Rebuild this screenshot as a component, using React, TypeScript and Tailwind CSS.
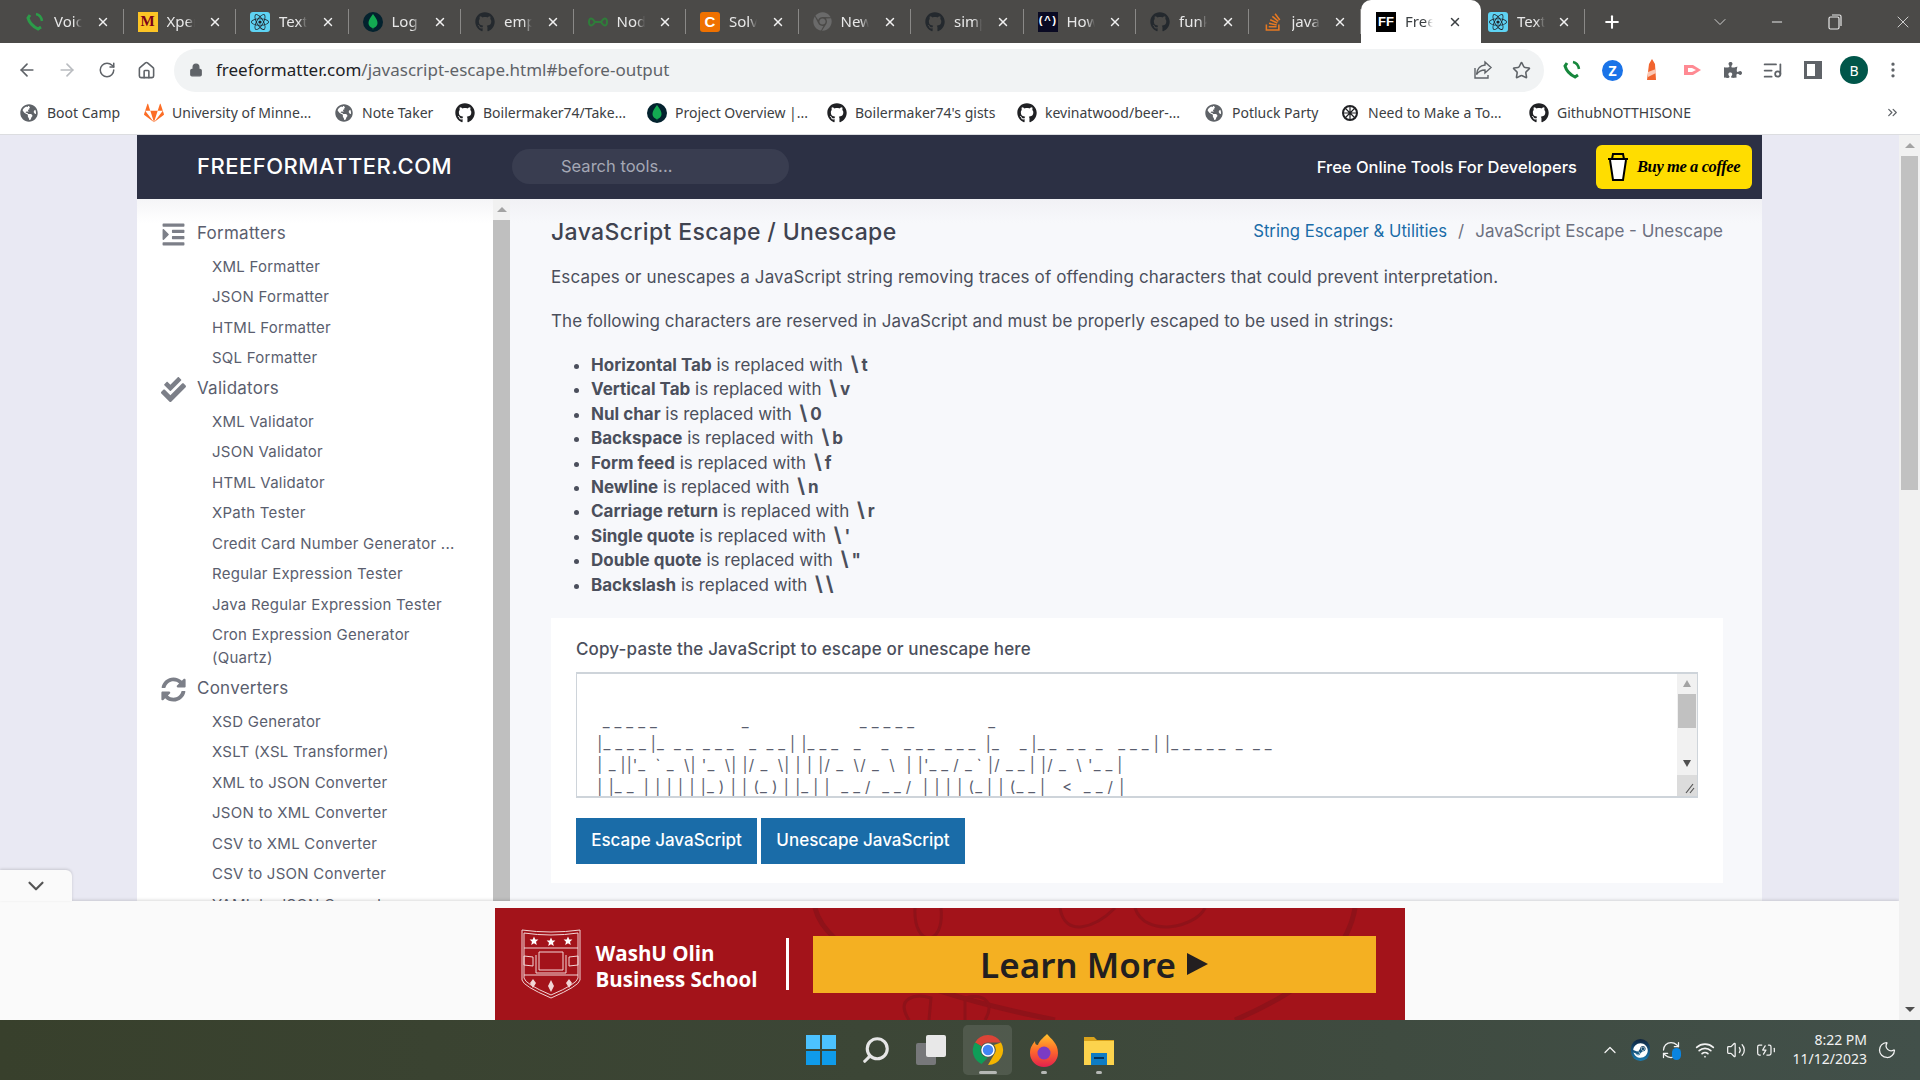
import React from 'react';
import {
  FaGithub,
  FaReact,
  FaStackOverflow,
  FaChrome,
  FaGitlab,
  FaGlobeAmericas,
  FaIndent,
  FaCheckDouble,
  FaSyncAlt,
  FaPuzzlePiece,
  FaSteam,
} from 'react-icons/fa';
import {
  ArrowLeft,
  ArrowRight,
  RotateCw,
  Home,
  Lock,
  Star,
  MoreVertical,
  ChevronDown,
  ChevronUp,
  Minus,
  X,
  Plus,
  Search,
  ListMusic,
  Wifi,
  Volume2,
  Moon,
  RefreshCw,
  BatteryCharging,
  ChevronsRight,
} from 'lucide-react';

const MongoIcon = ({ size = 20 }: { size?: number }) => (
  <span className="flex items-center justify-center rounded-full bg-[#03222e] shrink-0" style={{ width: size, height: size }}>
    <svg width={size * 0.5} height={size * 0.8} viewBox="0 0 10 16">
      <path d="M5 0 C8 4 9.5 6 9.5 9 C9.5 12 7 13.5 5.4 14 L5 16 L4.6 14 C3 13.5 0.5 12 0.5 9 C0.5 6 2 4 5 0" fill="#13aa52" />
    </svg>
  </span>
);

const ReactTile = () => (
  <span className="flex h-5 w-5 items-center justify-center rounded-[3px] bg-[#5ed3f3] text-[#20232a] shrink-0">
    <FaReact size={18} />
  </span>
);

const tabs = [
  { title: 'Voic', icon: <svg width="20" height="20" viewBox="0 0 20 20" fill="none" stroke="#2c9c49" strokeWidth="3"><path d="M5 3 L3 6 Q5 13 13 17 L16 15" /><path d="M11 2 Q16 3 17 9" strokeWidth="2.5" /></svg> },
  { title: 'Xper', icon: <span className="flex h-5 w-5 items-center justify-center bg-[#fcc425] text-[15px] font-black leading-none text-[#7a0019] font-['Liberation_Serif',serif] shrink-0">M</span> },
  { title: 'Text', icon: <ReactTile /> },
  { title: 'Log', icon: <MongoIcon /> },
  { title: 'emp', icon: <FaGithub size={20} className="text-[#24292e] shrink-0" /> },
  { title: 'Nod', icon: <svg width="20" height="20" viewBox="0 0 20 20" fill="none" stroke="#2f7d3a" strokeWidth="2"><path d="M7 10 C3 4 1 7 1 10 C1 13 3 16 7 10 L13 10 C17 4 19 7 19 10 C19 13 17 16 13 10" /></svg> },
  { title: 'Solv', icon: <span className="flex h-5 w-5 items-center justify-center rounded-[3px] bg-[#ef7100] text-[15px] font-bold leading-none text-white font-['Liberation_Sans',sans-serif] shrink-0">C</span> },
  { title: 'New', icon: <FaChrome size={19} className="text-[#6a6a6a] shrink-0" /> },
  { title: 'simp', icon: <FaGithub size={20} className="text-[#24292e] shrink-0" /> },
  { title: 'How', icon: <span className="flex h-5 w-5 items-center justify-center bg-[#0a0a23] text-[11px] font-bold leading-none text-white font-['Liberation_Mono',monospace] shrink-0">(^)</span> },
  { title: 'funk', icon: <FaGithub size={20} className="text-[#24292e] shrink-0" /> },
  { title: 'java', icon: <FaStackOverflow size={20} className="text-[#e87922] shrink-0" /> },
];

const bookmarks = [
  { label: 'Boot Camp', icon: <FaGlobeAmericas size={18} className="text-[#5f6368]" />, w: 125 },
  { label: 'University of Minne...', icon: <FaGitlab size={20} className="text-[#fc6d26]" />, w: 190 },
  { label: 'Note Taker', icon: <FaGlobeAmericas size={18} className="text-[#5f6368]" />, w: 121 },
  { label: 'Boilermaker74/Take...', icon: <FaGithub size={20} className="text-[#202124]" />, w: 192 },
  { label: 'Project Overview |...', icon: <MongoIcon />, w: 180 },
  { label: "Boilermaker74's gists", icon: <FaGithub size={20} className="text-[#202124]" />, w: 190 },
  { label: 'kevinatwood/beer-...', icon: <FaGithub size={20} className="text-[#202124]" />, w: 187 },
  { label: 'Potluck Party', icon: <FaGlobeAmericas size={18} className="text-[#5f6368]" />, w: 136 },
  { label: 'Need to Make a To...', icon: <svg width="18" height="18" viewBox="0 0 18 18" fill="none" stroke="#202124" strokeWidth="2"><circle cx="9" cy="9" r="7" /><path d="M2 9 H16 M9 2 V16 M4 4 L14 14 M14 4 L4 14" strokeWidth="1.2" /></svg>, w: 189 },
  { label: 'GithubNOTTHISONE', icon: <FaGithub size={20} className="text-[#202124]" />, w: 180 },
];

const navSections = [
  {
    title: 'Formatters',
    icon: <FaIndent size={25} />,
    items: ['XML Formatter', 'JSON Formatter', 'HTML Formatter', 'SQL Formatter'],
  },
  {
    title: 'Validators',
    icon: <FaCheckDouble size={25} />,
    items: [
      'XML Validator',
      'JSON Validator',
      'HTML Validator',
      'XPath Tester',
      'Credit Card Number Generator ...',
      'Regular Expression Tester',
      'Java Regular Expression Tester',
      'Cron Expression Generator (Quartz)',
    ],
  },
  {
    title: 'Converters',
    icon: <FaSyncAlt size={25} />,
    items: [
      'XSD Generator',
      'XSLT (XSL Transformer)',
      'XML to JSON Converter',
      'JSON to XML Converter',
      'CSV to XML Converter',
      'CSV to JSON Converter',
      'YAML to JSON Converter',
    ],
  },
];

const escapes = [
  ['Horizontal Tab', 't'],
  ['Vertical Tab', 'v'],
  ['Nul char', '0'],
  ['Backspace', 'b'],
  ['Form feed', 'f'],
  ['Newline', 'n'],
  ['Carriage return', 'r'],
  ['Single quote', "'"],
  ['Double quote', '"'],
  ['Backslash', '\\'],
];

const asciiArt = [
  '  _____               _                    _____             _',
  ' |____|_ __ ___  _ __| |___  _   _  ___ ___ |_   _|__ __ _  ___| |_____ _ __',
  ' | _||\'_ ` _ \\| \'_ \\| |/ _ \\| | | |/ _ \\/ _ \\  | |\'__/ _` |/ __| |/ _ \\ \'__|',
  ' | |__ | | | | | |_) | | (_) | |_| |  __/  __/  | | | | (_| | (__|   <  __/ |',
];

const Tab = ({ title, icon, active }: { title: string; icon: React.ReactNode; active?: boolean }) => (
  <div className={`flex h-[43px] shrink-0 items-center ${active ? 'w-[120px] rounded-t-[10px] bg-white pl-[15px] pr-[19px]' : 'w-[112.5px]'}`}>
    {!active && <span className="w-[14px] shrink-0" />}
    {icon}
    <span className={`ml-[9px] w-[28px] overflow-hidden whitespace-nowrap text-[15px] [mask-image:linear-gradient(90deg,#000_70%,transparent)] ${active ? 'text-[#3c4043]' : 'text-[#e8e8e8]'}`}>{title}</span>
    <X size={14} strokeWidth={2.5} className={`ml-auto shrink-0 ${active ? 'text-[#3c4043]' : 'text-[#f0f0f0]'}`} />
    {!active && <span className="ml-[13px] h-[25px] w-px shrink-0 bg-[#8a8987]" />}
  </div>
);

const TabBar = () => (
  <div className="flex h-[43px] shrink-0 items-center bg-[#4b4a48] pl-[11px]">
    {tabs.map((t, i) => (
      <Tab key={i} title={t.title} icon={t.icon} />
    ))}
    <Tab
      active
      title="Free"
      icon={<span className="flex h-5 w-5 shrink-0 items-center justify-center bg-black text-[13px] font-bold leading-none text-white font-['Liberation_Sans',sans-serif]">FF</span>}
    />
    <div className="flex h-[43px] w-[104px] shrink-0 items-center pl-[7px]">
      <ReactTile />
      <span className="ml-[9px] w-[28px] overflow-hidden whitespace-nowrap text-[15px] text-[#e8e8e8] [mask-image:linear-gradient(90deg,#000_70%,transparent)]">Text</span>
      <X size={14} strokeWidth={2.5} className="ml-auto shrink-0 text-[#f0f0f0]" />
      <span className="ml-[13px] h-[25px] w-px shrink-0 bg-[#8a8987]" />
    </div>
    <Plus size={20} strokeWidth={2.5} className="ml-[17px] text-white" />
    <ChevronDown size={20} strokeWidth={1} className="ml-[88px] text-[#e8e8e8]" />
    <Minus size={16} strokeWidth={1.5} className="ml-[39px] text-[#e8e8e8]" />
    <svg width="14" height="16" viewBox="0 0 14 16" fill="none" stroke="#e8e8e8" strokeWidth="1.2" className="ml-[43px]">
      <rect x="1" y="3" width="10" height="12" rx="1.5" />
      <path d="M4 1 H11.5 Q13 1 13 2.5 V12" />
    </svg>
    <X size={20} strokeWidth={1} className="ml-[51px] text-[#e8e8e8]" />
  </div>
);

const Toolbar = () => (
  <div className="flex h-[54px] shrink-0 items-center bg-white">
    <ArrowLeft size={20} className="ml-[17px] text-[#5f6368]" />
    <ArrowRight size={20} className="ml-[20px] text-[#b9bcc0]" />
    <RotateCw size={18} className="ml-[21px] text-[#5f6368]" />
    <Home size={19} className="ml-[21px] text-[#5f6368]" />
    <div className="ml-[18px] flex h-[43px] w-[1370px] items-center rounded-full bg-[#f1f3f4] pl-[15px]">
      <Lock size={14} fill="#5f6368" className="text-[#5f6368]" />
      <span className="ml-[13px] text-[17px] text-[#5f6368]">
        <span className="text-[#202124]">freeformatter.com</span>/javascript-escape.html#before-output
      </span>
      <svg width="20" height="20" viewBox="0 0 20 20" fill="none" stroke="#5f6368" strokeWidth="1.4" className="ml-auto mr-[-2px]">
        <path d="M12 2 L18 7.5 L12 13 V10 C8 10 5.5 11.5 3.5 14.5 C4 9.5 7 5.5 12 5 Z" />
        <path d="M2 8 V18 H15 V15" />
      </svg>
      <Star size={19} className="ml-[21px] mr-[13px] text-[#5f6368]" />
    </div>
    <svg width="20" height="20" viewBox="0 0 20 20" fill="none" stroke="#16873c" strokeWidth="3" className="ml-[18px]">
      <path d="M5 3 L3 6 Q5 13 13 17 L16 15" />
      <path d="M11 2 Q16 3 17 9" strokeWidth="2.5" />
    </svg>
    <span className="ml-[20px] flex h-[21px] w-[21px] items-center justify-center rounded-full bg-[#1a73e8] text-[14px] font-bold text-white">Z</span>
    <svg width="18" height="24" viewBox="0 0 18 24" className="ml-[20px]">
      <path d="M9 1 L12 6 L13 22 H4 L6 6 Z" fill="#f1642e" />
      <path d="M5 14 L13 11 V15 L5 19 Z" fill="#fbc8b4" />
    </svg>
    <svg width="22" height="20" viewBox="0 0 22 20" className="ml-[21px]">
      <path d="M2 5 H11 L19 10 L11 15 H2 Z" fill="#ff8a93" />
      <path d="M6 8 H10 L14 10 L10 12 H6 Z" fill="#fff" />
    </svg>
    <FaPuzzlePiece size={18} className="ml-[20px] text-[#5f6368]" />
    <ListMusic size={21} className="ml-[20px] text-[#5f6368]" />
    <svg width="18" height="18" viewBox="0 0 18 18" className="ml-[21px]">
      <path d="M0 0 H18 V18 H0 Z M3 3 V15 H11 V3 Z" fill="#5f6368" fillRule="evenodd" />
    </svg>
    <span className="ml-[18px] flex h-[28px] w-[28px] items-center justify-center rounded-full bg-[#00564a] text-[14px] text-white">B</span>
    <MoreVertical size={20} className="ml-[15px] text-[#5f6368]" />
  </div>
);

const BookmarksBar = () => (
  <div className="flex h-[38px] shrink-0 items-center border-b border-[#dcdde0] bg-white pb-[6px] pl-[19px]">
    {bookmarks.map((b) => (
      <div key={b.label} className="flex shrink-0 items-center" style={{ width: b.w }}>
        <span className="flex w-[20px] shrink-0 justify-center">{b.icon}</span>
        <span className="ml-[8px] whitespace-nowrap text-[14px] text-[#3c4043]">{b.label}</span>
      </div>
    ))}
    <ChevronsRight size={15} className="ml-auto mr-[20px] text-[#5f6368]" />
  </div>
);

const SiteHeader = () => (
  <div className="flex h-[64px] shrink-0 items-center bg-[#2c3044] pl-[60px] pr-[10px] text-white">
    <span className="mb-[2px] w-[315px] shrink-0 text-[22px] font-medium tracking-[0.5px]">FREEFORMATTER.COM</span>
    <div className="mb-[2px] flex h-[35px] w-[277px] items-center rounded-full bg-[#393d50] pl-[49px] text-[16.5px] text-[#a5a8b5]">Search tools...</div>
    <span className="ml-auto text-[16.5px] font-medium">Free Online Tools For Developers</span>
    <div className="ml-[19px] flex h-[44px] w-[156px] items-center gap-[8px] rounded-[6px] bg-[#ffdd00] pl-[11px] text-black">
      <svg width="22" height="30" viewBox="0 0 22 30" fill="none" stroke="#000" strokeWidth="2">
        <path d="M3 8 L6 28 H16 L19 8" fill="#fff" />
        <path d="M1 7 H21 M5 7 L6 2 H16 L17 7" />
      </svg>
      <span className="whitespace-nowrap font-['Liberation_Serif',serif] text-[16.5px] font-bold italic tracking-[-0.4px]">Buy me a coffee</span>
    </div>
  </div>
);

const Sidebar = () => (
  <div className="flex w-[373px] shrink-0 overflow-hidden bg-white">
    <div className="flex-1 bg-[linear-gradient(#f5f5f7,#ffffff_24px)] pl-[24px] pt-[19px]">
      {navSections.map((s) => (
        <div key={s.title}>
          <div className="flex h-[30px] items-center pt-[2px] text-[#5a5e6e]">
            <span className="flex w-[36px] shrink-0 text-[#7c7f88]">{s.icon}</span>
            <span className="text-[17px] tracking-[0.25px]">{s.title}</span>
          </div>
          <ul className="mt-[3px] w-[303px] pl-[51px]">
            {s.items.map((item) => (
              <li key={item} className="py-[3.75px] text-[15px] leading-[23px] tracking-[0.25px] text-[#5a5e6e]">
                {item}
              </li>
            ))}
          </ul>
        </div>
      ))}
    </div>
    <div className="flex w-[17px] shrink-0 flex-col">
      <div className="flex h-[21px] items-center justify-center bg-[#f1f1f1]">
        <span className="h-0 w-0 border-x-[5px] border-b-[5px] border-x-transparent border-b-[#a3a3a3]" />
      </div>
      <div className="flex-1 bg-[#bfbfbf]" />
    </div>
  </div>
);

const MainContent = () => (
  <div className="min-w-0 flex-1 bg-[linear-gradient(#f1f1f5,#f7f8fb_24px)] pl-[41px] pr-[39px] text-[#4b4f5c]">
    <div className="flex h-[66px] items-center justify-between">
      <h1 className="text-[23px] font-medium tracking-[0.35px] text-[#3f4350]">JavaScript Escape / Unescape</h1>
      <div className="flex text-[17px] text-[#6c7080]">
        <span className="text-[16.7px] text-[#1a6ca8]">String Escaper &amp; Utilities</span>
        <span className="mx-[11px]">/</span>
        <span>JavaScript Escape - Unescape</span>
      </div>
    </div>
    <p className="text-[17px] leading-[24px] tracking-[0.13px]">Escapes or unescapes a JavaScript string removing traces of offending characters that could prevent interpretation.</p>
    <p className="mt-[20px] text-[17px] leading-[24px] tracking-[0.05px]">The following characters are reserved in JavaScript and must be properly escaped to be used in strings:</p>
    <ul className="mt-[19px] list-disc pl-[40px] text-[17px]">
      {escapes.map(([name, ch]) => (
        <li key={name} className="h-[24.4px] leading-[24.4px]">
          <strong className="font-bold">{name}</strong> is replaced with{' '}
          <strong className="ml-[3px] font-bold">
            <span className="text-[20px]">\</span>
            {ch === '\\' ? <span className="ml-[3px] text-[20px]">\</span> : <span className="ml-[3px]">{ch}</span>}
          </strong>
        </li>
      ))}
    </ul>
    <div className="mt-[22px] bg-white px-[25px] pb-[19px] pt-[19px]">
      <div className="text-[17px] font-medium leading-[24px] tracking-[0.14px]">Copy-paste the JavaScript to escape or unescape here</div>
      <div className="mt-[11px] flex h-[126px] border-y-2 border-x border-[#ced4da] bg-white">
        <pre className="min-w-0 flex-1 overflow-hidden whitespace-pre pl-[15px] pt-[37px] text-[15px] leading-[21.6px] tracking-[1.1px] text-[#5a5e6e] font-['Inter',sans-serif]">
          {asciiArt.map((line, i) => (
            <div key={i}>
              {line.split(/(_+)/).map((part, j) =>
                part.startsWith('_') ? (
                  <span key={j} className="tracking-[5px]">{part}</span>
                ) : (
                  <span key={j}>{part}</span>
                ),
              )}
            </div>
          ))}
        </pre>
        <div className="flex w-[20px] shrink-0 flex-col bg-[#f1f1f1]">
          <div className="flex h-[20px] items-center justify-center">
            <span className="h-0 w-0 border-x-[4px] border-b-[7px] border-x-transparent border-b-[#a3a3a3]" />
          </div>
          <div className="mx-[1px] h-[34px] bg-[#c1c1c1]" />
          <div className="flex flex-1 items-end justify-center pb-[8px]">
            <span className="h-0 w-0 border-x-[4px] border-t-[7px] border-x-transparent border-t-[#505050]" />
          </div>
          <div className="flex h-[21px] items-end justify-end bg-[#dcdcdc] p-[2px]">
            <svg width="10" height="12" viewBox="0 0 10 12" stroke="#555" strokeWidth="1.2"><path d="M1 11 L8 2 M5 11 L9 6" /></svg>
          </div>
        </div>
      </div>
      <div className="mt-[20px] flex gap-[4px] text-[17px] font-medium text-white">
        <div className="flex h-[46px] w-[181px] items-center justify-center bg-[#1a6ca8]">Escape JavaScript</div>
        <div className="flex h-[46px] w-[204px] items-center justify-center bg-[#1a6ca8]">Unescape JavaScript</div>
      </div>
    </div>
  </div>
);

const ShieldStar = ({ x, y }: { x: number; y: number }) => (
  <path
    transform={`translate(${x} ${y})`}
    d="M0 -4.5 L1.3 -1.4 L4.4 -1.4 L2 0.7 L2.8 4 L0 2.2 L-2.8 4 L-2 0.7 L-4.4 -1.4 L-1.3 -1.4 Z"
    fill="#fff"
    stroke="none"
  />
);

const Shield = () => (
  <svg width="60" height="72" viewBox="0 0 60 72" fill="none" stroke="#f2d6d6" strokeWidth="1" className="shrink-0">
    <path d="M1 2 Q30 6 59 2 V52 Q58 58 30 70 Q2 58 1 52 Z" />
    <path d="M3 5 Q30 9 57 5 V50 Q56 56 30 67 Q4 56 3 50 Z" />
    <path d="M3 20 H57 M3 47 H57" />
    <path d="M18 24 H42 V42 H18 Z M15 27 V45 H45 V27" />
    <path d="M3 28 L12 29 V38 L3 37 Z M57 28 L48 29 V38 L57 37 Z" />
    <ShieldStar x={13} y={13} />
    <ShieldStar x={30} y={14} />
    <ShieldStar x={47} y={13} />
    <g fill="#f2d6d6" stroke="none">
      <path d="M12 51 L15 55 L12 60 L9 55 Z M30 52 L33 58 L30 64 L27 58 Z M48 51 L51 55 L48 60 L45 55 Z" />
    </g>
  </svg>
);

const AdBanner = () => (
  <div className="absolute inset-x-0 bottom-0 flex h-[119px] justify-center bg-[#fafafa] pt-[7px] shadow-[0_-1px_3px_rgba(0,0,0,0.15)]">
    <div className="absolute -top-[31px] left-0 flex h-[31px] w-[72px] items-center justify-center rounded-tr-[6px] bg-[#fafafa] shadow-[0_-1px_3px_rgba(0,0,0,0.15)]">
      <ChevronDown size={26} className="text-[#555]" />
    </div>
    <div className="relative flex h-[112px] w-[910px] items-center overflow-hidden bg-[#a3131a] pl-[26px]">
      <svg width="910" height="112" viewBox="0 0 910 112" fill="none" stroke="#8f1219" strokeWidth="5" className="absolute left-0 top-0">
        <path d="M320 0 C330 40 400 80 560 112" />
        <path d="M860 0 C850 60 780 95 740 112" />
        <path d="M420 0 C418 40 450 40 446 0 M565 0 C570 30 600 20 620 0 M640 0 C650 30 700 20 710 0" strokeWidth="3" />
        <path d="M414 112 C400 90 420 85 436 90 L434 112 M470 112 L470 90 C490 85 500 95 490 112" strokeWidth="3" />
      </svg>
      <Shield />
      <div className="relative ml-[15px] w-[179px] pt-[3px] font-['Open_Sans',sans-serif] text-[20.5px] font-bold leading-[26px] text-white">
        WashU Olin
        <br />
        Business School
      </div>
      <span className="relative ml-[11px] h-[52px] w-[3px] bg-white" />
      <div className="relative ml-[24px] flex h-[57px] w-[563px] items-center justify-center gap-[11px] bg-[#f4b022] text-[#231f20]">
        <span className="font-['Noto_Sans',sans-serif] text-[35px] font-semibold leading-none">Learn More</span>
        <span className="h-0 w-0 border-y-[11px] border-l-[21px] border-y-transparent border-l-[#231f20]" />
      </div>
    </div>
  </div>
);

const PageScrollbar = () => (
  <div className="flex w-[21px] shrink-0 flex-col bg-[#f1f1f1]">
    <div className="flex h-[21px] items-center justify-center">
      <span className="h-0 w-0 border-x-[5px] border-b-[5px] border-x-transparent border-b-[#a3a3a3]" />
    </div>
    <div className="mx-[2px] h-[334px] bg-[#c1c1c1]" />
    <div className="flex flex-1 items-end justify-center pb-[8px]">
      <span className="h-0 w-0 border-x-[5px] border-t-[5px] border-x-transparent border-t-[#505050]" />
    </div>
  </div>
);

const Page = () => (
  <div className="flex min-h-0 flex-1">
    <div className="relative min-w-0 flex-1 overflow-hidden bg-[#e9e9f3] px-[137px]">
      <div className="flex h-full flex-col overflow-hidden">
        <SiteHeader />
        <div className="flex min-h-0 flex-1">
          <Sidebar />
          <MainContent />
        </div>
      </div>
      <AdBanner />
    </div>
    <PageScrollbar />
  </div>
);

const ChromeLogo = () => (
  <svg width="32" height="32" viewBox="0 0 32 32">
    <path d="M16 1 A15 15 0 0 1 29 8.5 H16 A7.5 7.5 0 0 0 9.5 12.2 L3 8.5 A15 15 0 0 1 16 1" fill="#db4437" />
    <path d="M3 8.5 L9.5 12.2 A7.5 7.5 0 0 0 16 23.5 L9.5 30 A15 15 0 0 1 3 8.5" fill="#0f9d58" />
    <path d="M29 8.5 A15 15 0 0 1 16 31 L22.5 19.8 A7.5 7.5 0 0 0 22 11 Z" fill="#f4b400" />
    <circle cx="16" cy="16" r="6" fill="#4285f4" stroke="#fff" strokeWidth="1.5" />
  </svg>
);

const FirefoxLogo = () => (
  <svg width="30" height="34" viewBox="0 0 30 34">
    <defs>
      <linearGradient id="ff" x1="0" y1="0" x2="0" y2="1">
        <stop offset="0" stopColor="#ffc32c" />
        <stop offset="0.5" stopColor="#ff6a2a" />
        <stop offset="1" stopColor="#e3204e" />
      </linearGradient>
    </defs>
    <path d="M18 1 C22 6 29 10 29 20 A14 14 0 0 1 1 20 C1 14 4 11 6 8 C6 11 7 12 9 12 C10 8 14 5 18 1" fill="url(#ff)" />
    <circle cx="15" cy="20" r="6.5" fill="#7b3bc4" />
  </svg>
);

const Taskbar = () => (
  <div className="grid h-[60px] shrink-0 grid-cols-[1fr_auto_1fr] items-center bg-[linear-gradient(90deg,#38402c,#3c4636_45%,#42504a)] text-[#f2f2f2]">
    <div />
    <div className="flex items-center gap-[9px]">
      <div className="flex h-[50px] w-[46px] items-center justify-center">
        <div className="grid h-[30px] w-[30px] grid-cols-2 gap-[2px]">
          <span className="bg-[#4cc2ff]" />
          <span className="bg-[#4cc2ff]" />
          <span className="bg-[#0f9bea]" />
          <span className="bg-[#0f9bea]" />
        </div>
      </div>
      <div className="flex h-[50px] w-[46px] items-center justify-center">
        <Search size={30} strokeWidth={2.5} className="-scale-x-100 text-[#e6e6e6]" />
      </div>
      <div className="flex h-[50px] w-[46px] items-center justify-center">
        <div className="relative h-[30px] w-[30px]">
          <span className="absolute bottom-0 left-0 h-[22px] w-[20px] rounded-[2px] bg-[#77787a]" />
          <span className="absolute right-0 top-0 h-[22px] w-[20px] rounded-[2px] bg-[#e8e8e8]" />
        </div>
      </div>
      <div className="relative flex h-[50px] w-[49px] items-center justify-center rounded-[5px] bg-white/10">
        <ChromeLogo />
        <span className="absolute bottom-[1px] h-[3px] w-[18px] rounded-full bg-[#b5b8b5]" />
      </div>
      <div className="relative flex h-[50px] w-[46px] items-center justify-center">
        <FirefoxLogo />
        <span className="absolute bottom-[1px] h-[3px] w-[6px] rounded-full bg-[#b5b8b5]" />
      </div>
      <div className="relative flex h-[50px] w-[46px] items-center justify-center">
        <svg width="30" height="32" viewBox="0 0 30 32">
          <path d="M0 3 H10 L13 6 H30 V31 H0 Z" fill="#d9a21b" />
          <rect y="7" width="30" height="24" fill="#fcd34d" />
          <rect x="7" y="19" width="16" height="12" fill="#0f7cc4" />
          <rect x="10" y="23" width="10" height="2" fill="#06345a" />
        </svg>
        <span className="absolute bottom-[1px] h-[3px] w-[6px] rounded-full bg-[#b5b8b5]" />
      </div>
    </div>
    <div className="flex items-center justify-end pr-[23px]">
      <ChevronUp size={20} strokeWidth={1.5} />
      <span className="ml-[11px] flex h-[22px] w-[19px] items-center justify-center rounded-full bg-[linear-gradient(#10243e,#1b7bb0)]">
        <FaSteam size={15} className="text-white" />
      </span>
      <span className="relative ml-[11px] flex w-[20px] justify-center">
        <RefreshCw size={20} strokeWidth={1.5} />
        <span className="absolute bottom-0 right-0 h-[12px] w-[9px] rounded-full bg-[#0a84e0]" />
      </span>
      <Wifi size={20} strokeWidth={2} className="ml-[14px]" />
      <Volume2 size={20} strokeWidth={1.5} className="ml-[11px]" />
      <BatteryCharging size={20} strokeWidth={1.5} className="ml-[10px]" />
      <div className="ml-[17px] -translate-y-px text-right font-['Noto_Sans',sans-serif] text-[14px] leading-[19px]">
        <div>8:22 PM</div>
        <div>11/12/2023</div>
      </div>
      <Moon size={20} strokeWidth={1.5} className="ml-[10px]" />
    </div>
  </div>
);

export default function App() {
  return (
    <div className="flex h-screen w-full flex-col overflow-hidden bg-white font-['Inter',sans-serif]">
      <div className="shrink-0 font-['Noto_Sans',sans-serif]">
        <TabBar />
        <Toolbar />
        <BookmarksBar />
      </div>
      <Page />
      <Taskbar />
    </div>
  );
}
